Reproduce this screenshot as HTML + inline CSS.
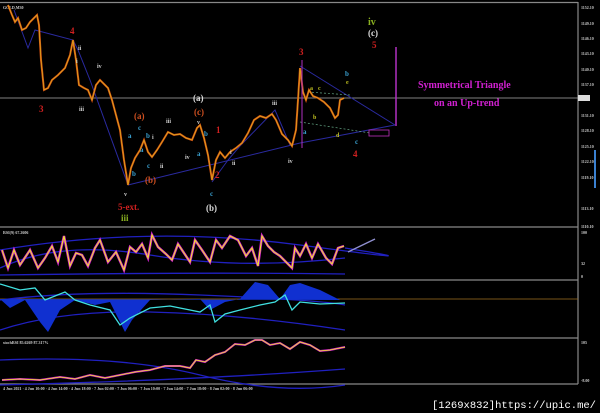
<!DOCTYPE html>
<html><head><style>
html,body{margin:0;padding:0;background:#000;}
svg{display:block}
text{font-family:"Liberation Serif",serif;font-weight:bold}
.s{font-family:"Liberation Sans",sans-serif;font-weight:normal;fill:#ccc;font-size:4px}
</style></head><body>
<svg width="600" height="413" viewBox="0 0 600 413" xmlns="http://www.w3.org/2000/svg">
<rect width="600" height="413" fill="#000"/>
<g stroke="#888" stroke-width="1.2" fill="none">
<line x1="0" y1="2.5" x2="578" y2="2.5"/>
<line x1="0" y1="227" x2="578" y2="227"/>
<line x1="0" y1="280" x2="578" y2="280"/>
<line x1="0" y1="338" x2="578" y2="338"/>
<line x1="0" y1="384" x2="578" y2="384"/>
<line x1="578" y1="2" x2="578" y2="384"/>
</g>
<line x1="0" y1="98" x2="578" y2="98" stroke="#aaa" stroke-width="0.7"/>
<line x1="0" y1="299" x2="578" y2="299" stroke="#a07020" stroke-width="0.8"/>
<g class="s">
<text x="581" y="9">1152.10</text><text x="581" y="25">1149.10</text><text x="581" y="40">1146.10</text><text x="581" y="55">1143.10</text><text x="581" y="71">1140.10</text><text x="581" y="86">1137.10</text><text x="581" y="117">1131.10</text><text x="581" y="132">1128.10</text><text x="581" y="148">1125.10</text><text x="581" y="163">1122.10</text><text x="581" y="179">1119.10</text><text x="581" y="210">1113.10</text><text x="581" y="228">1110.10</text>
<text x="581" y="234">100</text><text x="581" y="265">32</text><text x="581" y="278">0</text><text x="581" y="344">105</text><text x="581" y="382">-8.00</text>
<text x="3" y="9">GOLD,M30</text><text x="3" y="234">RSI(9) 67.2606</text><text x="3" y="344">stochRSI 85.6269 87.317%</text>
<text x="3" y="390">4 Jun 2021  ·  4 Jun 10:00  ·  4 Jun 14:00  ·  4 Jun 18:00  ·  7 Jun 02:00  ·  7 Jun 06:00  ·  7 Jun 10:00  ·  7 Jun 14:00  ·  7 Jun 18:00  ·  8 Jun 02:00  ·  8 Jun 06:00</text>
</g>
<rect x="578" y="95" width="12" height="6" fill="#ddd"/>
<rect x="594" y="150" width="2" height="38" fill="#3a80d0"/>
<g stroke="#2a2aa0" stroke-width="1" fill="none">
<polyline points="14,10 28,48 35,30 73,40 78,50 90,80 128,185"/>
<polyline points="128,185 300,143 395,125"/>
<polyline points="300,66 395,125"/>
<polyline points="212,182 228,160 240,146 275,110 290,145"/>
</g>
<g stroke="#6a8" stroke-width="0.7" stroke-dasharray="2,2" fill="none">
<polyline points="300,122 370,133"/><polyline points="308,92 350,95"/>
</g>
<polyline fill="none" stroke="#d05010" stroke-width="2" points="8,5 12,15 15,22 18,18 22,30 26,28 30,22 34,18 37,15 39,25 41,60 44,90 48,88 52,80 58,75 65,68 70,55 73,40 76,60 79,85 84,88 88,90 92,100 96,85 100,80 104,84 108,88 112,100 116,115 120,130 124,160 128,185 131,168 135,158 140,150 144,140 148,152 152,157 157,150 162,142 168,132 174,135 180,134 186,138 192,140 197,128 200,125 204,138 208,155 212,180 216,160 220,152 225,158 230,152 236,148 242,143 248,133 254,120 260,116 266,118 272,114 276,120 282,134 288,140 292,146 296,130 298,100 300,68 303,92 306,100 309,90 313,96 318,98 324,102 330,108 335,118 338,115 340,100 344,98"/>
<polyline fill="none" stroke="#e0b020" stroke-width="0.7" points="8,5 12,15 15,22 18,18 22,30 26,28 30,22 34,18 37,15 39,25 41,60 44,90 48,88 52,80 58,75 65,68 70,55 73,40 76,60 79,85 84,88 88,90 92,100 96,85 100,80 104,84 108,88 112,100 116,115 120,130 124,160 128,185 131,168 135,158 140,150 144,140 148,152 152,157 157,150 162,142 168,132 174,135 180,134 186,138 192,140 197,128 200,125 204,138 208,155 212,180 216,160 220,152 225,158 230,152 236,148 242,143 248,133 254,120 260,116 266,118 272,114 276,120 282,134 288,140 292,146 296,130 298,100 300,68 303,92 306,100 309,90 313,96 318,98 324,102 330,108 335,118 338,115 340,100 344,98"/>
<line x1="396" y1="47" x2="396" y2="126" stroke="#b030c0" stroke-width="1.5"/>
<line x1="302" y1="60" x2="302" y2="148" stroke="#b030c0" stroke-width="1"/>
<rect x="369" y="130" width="20" height="6" fill="#000" stroke="#c030c0" stroke-width="0.8"/>
<g font-size="9">
<text x="39" y="112" fill="#d02020">3</text><text x="70" y="34" fill="#d02020">4</text>
<text x="299" y="55" fill="#d02020">3</text><text x="372" y="48" fill="#d02020">5</text>
<text x="353" y="157" fill="#d02020">4</text><text x="215" y="178" fill="#d02020">2</text><text x="216" y="133" fill="#d02020">1</text>
<text x="118" y="210" fill="#d02020">5-ext.</text>
<text x="134" y="119" fill="#d05020">(a)</text><text x="145" y="183" fill="#d05020">(b)</text><text x="194" y="115" fill="#d05020">(c)</text>
<text x="193" y="101" fill="#ddd">(a)</text><text x="206" y="211" fill="#ddd">(b)</text><text x="368" y="36" fill="#ddd">(c)</text>
<text x="368" y="25" fill="#8ab020" font-size="10">iv</text><text x="121" y="221" fill="#8ab020">iii</text>
<text x="418" y="88" fill="#d020d0" font-size="10">Symmetrical Triangle</text>
<text x="434" y="106" fill="#d020d0" font-size="10">on an  Up-trend</text>
</g>
<g font-size="7" fill="#3aa0d0">
<text x="128" y="138">a</text><text x="138" y="130">c</text><text x="146" y="138">b</text><text x="140" y="152">a</text><text x="147" y="168">c</text><text x="132" y="176">b</text>
<text x="204" y="136">b</text><text x="197" y="156">a</text><text x="210" y="196">c</text>
<text x="345" y="76">b</text><text x="303" y="134">a</text><text x="355" y="144">c</text>
</g>
<g font-size="6" fill="#c0c020"><text x="310" y="90">a</text><text x="318" y="90">c</text><text x="313" y="119">b</text><text x="336" y="137">d</text><text x="346" y="84">e</text></g>
<g font-size="6" fill="#ccc"><text x="78" y="50">ii</text><text x="76" y="63">i</text><text x="97" y="68">iv</text><text x="79" y="111">iii</text><text x="124" y="196">v</text><text x="166" y="123">iii</text><text x="152" y="139">i</text><text x="160" y="168">ii</text><text x="185" y="159">iv</text><text x="197" y="124">v</text><text x="230" y="154">i</text><text x="232" y="165">ii</text><text x="272" y="105">iii</text><text x="288" y="163">iv</text></g>
<g fill="none" stroke="#2020c0" stroke-width="1.3">
<path d="M0,250 Q150,225 300,245 T345,248"/><path d="M0,268 Q60,240 150,255 T345,258"/><path d="M0,275 Q200,272 345,274"/>
<path d="M0,300 Q80,290 200,295 T345,305"/><path d="M0,330 Q60,310 150,312 T345,330"/>
<path d="M0,360 Q120,355 200,375 T345,385"/><path d="M0,385 Q200,380 345,369"/>
</g>
<polyline fill="none" stroke="#d020d0" stroke-width="2.5" points="2,250 8,268 14,250 20,265 26,256 30,250 38,268 45,258 52,246 58,262 64,236 70,266 76,253 82,255 88,266 95,248 100,240 108,262 116,252 124,270 130,247 136,252 142,244 148,258 152,235 158,247 166,254 172,260 178,244 184,253 190,262 195,240 202,250 210,262 216,240 222,248 230,236 238,240 246,256 252,248 258,266 262,236 268,246 274,252 280,256 286,262 292,268 295,248 300,256 306,244 312,258 318,244 326,258 332,264 338,248 344,246"/>
<polyline fill="none" stroke="#f0f020" stroke-width="1" points="2,250 8,268 14,250 20,265 26,256 30,250 38,268 45,258 52,246 58,262 64,236 70,266 76,253 82,255 88,266 95,248 100,240 108,262 116,252 124,270 130,247 136,252 142,244 148,258 152,235 158,247 166,254 172,260 178,244 184,253 190,262 195,240 202,250 210,262 216,240 222,248 230,236 238,240 246,256 252,248 258,266 262,236 268,246 274,252 280,256 286,262 292,268 295,248 300,256 306,244 312,258 318,244 326,258 332,264 338,248 344,246"/>
<line x1="348" y1="252" x2="375" y2="239" stroke="#9090d0" stroke-width="1.3"/>
<path d="M0,299 L10,308 L25,300 L40,322 L48,332 L60,310 L75,300 L95,305 L110,302 L125,332 L132,320 L150,300 L200,299 L210,310 L225,302 L240,299 L255,282 L268,285 L280,299 L290,285 L300,283 L320,290 L340,300 L345,300 Z" fill="#1030d0"/>
<polyline fill="none" stroke="#40e0e0" stroke-width="1.3" points="0,284 20,290 35,288 45,300 55,296 65,292 75,300 90,305 110,310 120,325 130,318 150,308 170,306 190,310 200,312 210,305 215,322 225,314 240,310 260,305 275,302 285,295 292,310 300,302 320,304 345,303"/>
<polyline fill="none" stroke="#d020d0" stroke-width="2" points="2,380 20,379 40,380 60,377 75,379 90,375 105,378 120,375 135,372 150,370 165,366 180,366 190,368 196,360 205,362 215,355 225,352 235,344 245,345 255,340 262,340 270,345 280,343 290,349 300,342 310,345 320,351 330,350 345,347"/>
<polyline fill="none" stroke="#f0f020" stroke-width="0.8" points="2,380 20,379 40,380 60,377 75,379 90,375 105,378 120,375 135,372 150,370 165,366 180,366 190,368 196,360 205,362 215,355 225,352 235,344 245,345 255,340 262,340 270,345 280,343 290,349 300,342 310,345 320,351 330,350 345,347"/>
<text x="432" y="408" fill="#fff" font-size="10" textLength="164" lengthAdjust="spacingAndGlyphs" style="font-family:'Liberation Mono',monospace;font-weight:normal">[1269x832]https://upic.me/</text>
</svg>
</body></html>
